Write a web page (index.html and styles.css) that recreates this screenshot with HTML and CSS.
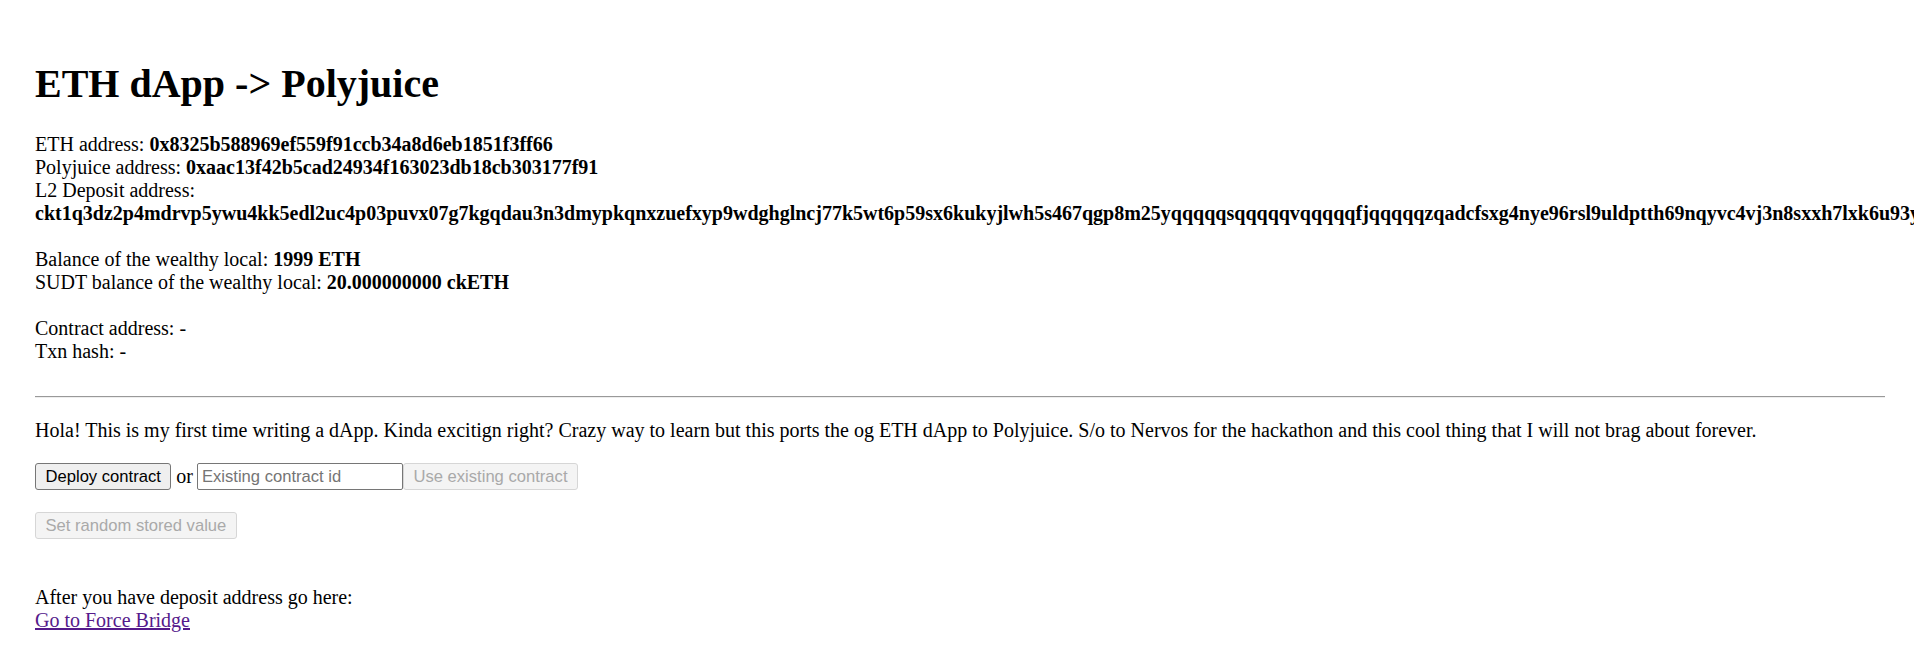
FILE: index.html
```html
<!DOCTYPE html>
<html>
<head>
<meta charset="utf-8">
<link rel="stylesheet" href="styles.css">
</head>
<body>
<div class="app">
  <h1 class="title">ETH dApp -&gt; Polyjuice</h1>
  <div class="info">
    ETH address: <b>0x8325b588969ef559f91ccb34a8d6eb1851f3ff66</b><br>
    Polyjuice address: <b>0xaac13f42b5cad24934f163023db18cb303177f91</b><br>
    L2 Deposit address: <b class="long">ckt1q3dz2p4mdrvp5ywu4kk5edl2uc4p03puvx07g7kgqdau3n3dmypkqnxzuefxyp9wdghglncj77k5wt6p59sx6kukyjlwh5s467qgp8m25yqqqqqsqqqqqvqqqqqfjqqqqqzqadcfsxg4nye96rsl9uldptth69nqyvc4vj3n8sxxh7lxk6u93y6kqmlgh8zvqg5xrlr4lq</b><br>
    <br>
    Balance of the wealthy local: <b>1999 ETH</b><br>
    SUDT balance of the wealthy local: <b>20.000000000 ckETH</b><br>
    <br>
    Contract address: -<br>
    Txn hash: -<br>
  </div>
  <hr class="divider">
  <p class="intro">Hola! This is my first time writing a dApp. Kinda excitign right? Crazy way to learn but this ports the og ETH dApp to Polyjuice. S/o to Nervos for the hackathon and this cool thing that I will not brag about forever.</p>
  <div class="row">
    <button class="btn">Deploy contract</button><span class="or">or</span><input class="field" placeholder="Existing contract id"><button class="btn" disabled>Use existing contract</button>
  </div>
  <div class="row row2">
    <button class="btn" disabled>Set random stored value</button>
  </div>
  <div class="footer">
    After you have deposit address go here:<br>
    <a class="link" href="#">Go to Force Bridge</a>
  </div>
</div>
</body>
</html>
```

FILE: styles.css
```css
html { overflow: hidden; }
body {
  margin: 0;
  background: #fff;
  color: #000;
  font-family: "Liberation Serif", "Times New Roman", serif;
  font-size: 20px;
}
.app {
  padding: 61px 29px 20px 35px;
}
.title {
  font-size: 40px;
  font-weight: bold;
  margin: 0 0 26px 0;
  line-height: 46px;
}
.info {
  line-height: 23px;
}
.divider {
  margin: 33px 0 0 0;
  border: none;
  border-top: 1px solid #999;
  border-bottom: 1px solid #eee;
  height: 0;
}
.intro {
  margin: 21px 0 0 0;
  line-height: 23px;
}
.row {
  display: flex;
  align-items: center;
  margin-top: 21px;
  height: 27px;
}
.row2 { margin-top: 22px; }
.btn {
  font-family: "Liberation Sans", Arial, sans-serif;
  font-size: 16.6px;
  height: 27px;
  padding: 0 9.5px;
  background: #efefef;
  color: #000;
  border: 1px solid #767676;
  border-radius: 3px;
  box-sizing: border-box;
}
.btn:disabled {
  background: #f4f4f4;
  color: #a9a9a9;
  border-color: #d6d6d6;
}
.or {
  margin: 0 4px 0 5px;
}
.field {
  font-family: "Liberation Sans", Arial, sans-serif;
  font-size: 16.6px;
  width: 206px;
  height: 27px;
  box-sizing: border-box;
  border: 1px solid #767676;
  border-radius: 2px;
  padding: 0 4px;
  margin: 0;
}
.field::placeholder { color: #757575; }
.footer {
  margin-top: 47px;
  line-height: 23px;
}
.link { color: #551a8b; }
```
